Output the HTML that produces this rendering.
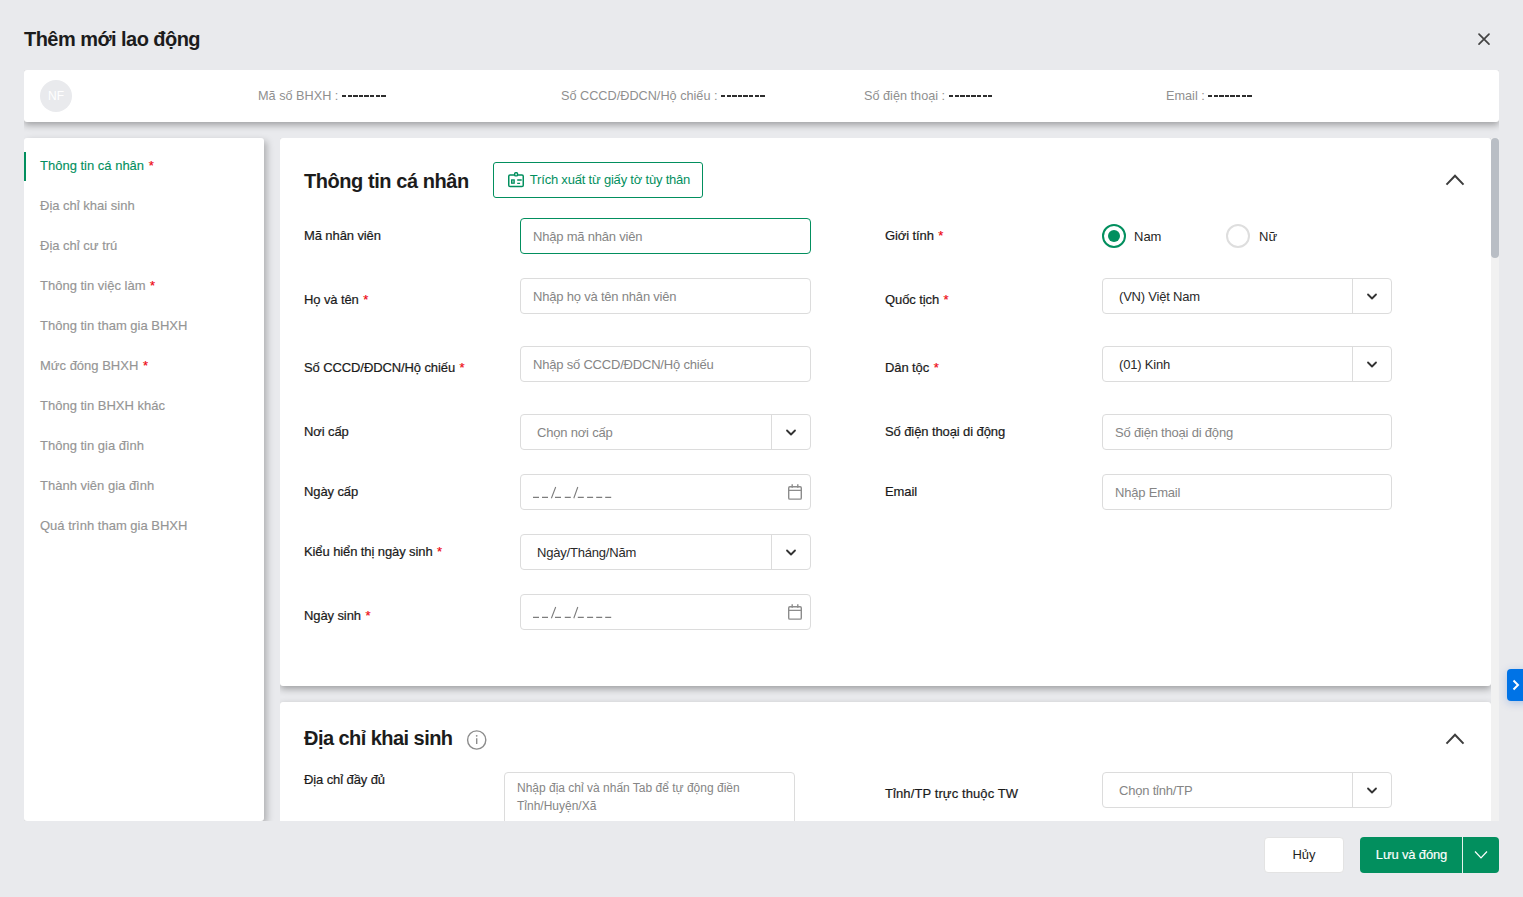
<!DOCTYPE html>
<html><head><meta charset="utf-8">
<style>
*{box-sizing:border-box;margin:0;padding:0}
html,body{width:1523px;height:897px;overflow:hidden;background:#e9eaed;font-family:"Liberation Sans",sans-serif;color:#1f1f1f;position:relative}
.abs{position:absolute}
.title{left:24px;top:28px;font-size:20px;font-weight:bold;color:#1c1c1c;white-space:nowrap;letter-spacing:-0.55px}
.close{left:1476px;top:31px;width:16px;height:16px}
.layer{position:absolute;left:0;top:0;width:1523px;height:897px;clip-path:inset(70px 24px 76px 24px)}
.main{position:absolute;left:0;top:0;width:1523px;height:897px;clip-path:inset(138px 24px 76px 280px)}
.hdr{left:24px;top:70px;width:1475px;height:52px;background:#fff;border-radius:3px;box-shadow:0 3px 7px rgba(0,0,0,.32)}
.avatar{left:40px;top:80px;width:32px;height:32px;border-radius:50%;background:#e9eaed;color:#fff;font-size:12px;line-height:32px;text-align:center}
.hinfo{top:88.5px;font-size:12.7px;color:#8f8f8f;white-space:nowrap}
.hinfo b{display:inline-block;width:43.6px;height:1.8px;vertical-align:2.5px;margin-left:0px;background:repeating-linear-gradient(90deg,#2e2e2e 0 4.3px,transparent 4.3px 5.62px)}
.nav{left:24px;top:138px;width:240px;height:683px;background:#fff;border-radius:3px;box-shadow:3px 3px 7px rgba(0,0,0,.25)}
.it{position:absolute;left:40px;font-size:13px;color:#959595;white-space:nowrap;-webkit-text-stroke:0.15px #959595}
.act{color:#028f5e;-webkit-text-stroke:0.12px #028f5e}
.req{color:#ee0a14;-webkit-text-stroke:0.2px #ee0a14;margin-left:1px}
.bar{left:24px;top:152px;width:2px;height:29px;background:#028f5e}
.card{left:280px;width:1211px;background:#fff;border-radius:3px;box-shadow:0 3px 7px rgba(0,0,0,.32)}
.sbtrack{left:1491px;top:138px;width:8px;height:700px;background:#f1f1f1}
.sbthumb{left:1491px;top:138px;width:8px;height:120px;background:#b9bec5;border-radius:4px}
.h2{position:absolute;font-size:20px;font-weight:bold;color:#1c1c1c;white-space:nowrap;letter-spacing:-0.44px}
.lbl{position:absolute;font-size:13px;color:#1a1a1a;white-space:nowrap;-webkit-text-stroke:0.2px #1a1a1a;letter-spacing:-0.1px}
.rad{position:absolute;font-size:13px;color:#1f1f1f;white-space:nowrap}
.inp{position:absolute;width:291px;height:36px;border:1px solid #dcdcdc;border-radius:4px;background:#fff}
.ph{position:absolute;left:12px;top:10px;font-size:13px;color:#858585;white-space:nowrap;letter-spacing:-0.2px}
.val{color:#2a2a2a}
.dv{position:absolute;right:38px;top:0;width:1px;height:34px;background:#dcdcdc}
.chev{position:absolute;right:13px;top:14px;width:12px;height:8px}
.cal{position:absolute;right:7px;top:9px;width:16px;height:16px}
.btn{position:absolute;font-size:13px;white-space:nowrap;text-align:center}
</style></head><body>
<div class="abs title">Thêm mới lao động</div>
<svg class="abs close" viewBox="0 0 16 16"><path d="M3 3.2L13 13.2M13 3.2L3 13.2" stroke="#444" stroke-width="1.7" stroke-linecap="round" fill="none"/></svg>

<div class="layer">
  <div class="abs hdr"></div>
  <div class="abs avatar">NF</div>
  <div class="abs hinfo" style="left:258px">Mã số BHXH : <b></b></div>
  <div class="abs hinfo" style="left:561px">Số CCCD/ĐDCN/Hộ chiếu : <b></b></div>
  <div class="abs hinfo" style="left:864px">Số điện thoại : <b></b></div>
  <div class="abs hinfo" style="left:1166px">Email : <b></b></div>

  <div class="abs nav"></div>
  <div class="abs bar"></div>
  <div class="it act" style="top:158px">Thông tin cá nhân <span class="req">*</span></div>
  <div class="it" style="top:198px">Địa chỉ khai sinh</div>
  <div class="it" style="top:238px">Địa chỉ cư trú</div>
  <div class="it" style="top:278px">Thông tin việc làm <span class="req">*</span></div>
  <div class="it" style="top:318px">Thông tin tham gia BHXH</div>
  <div class="it" style="top:358px">Mức đóng BHXH <span class="req">*</span></div>
  <div class="it" style="top:398px">Thông tin BHXH khác</div>
  <div class="it" style="top:438px">Thông tin gia đình</div>
  <div class="it" style="top:478px">Thành viên gia đình</div>
  <div class="it" style="top:518px">Quá trình tham gia BHXH</div>

</div>
<div class="main">
  <div class="abs card" style="top:138px;height:548px"></div>
  <div class="abs card" style="top:702px;height:200px"></div>
  <div class="abs sbtrack"></div>
  <div class="abs sbthumb"></div>

  <!-- section 1 -->
  <div class="h2" style="left:304px;top:169.5px">Thông tin cá nhân</div>
  <div class="btn" style="left:493px;top:162px;width:210px;height:36px;border:1px solid #028f5e;border-radius:3px;color:#028f5e;line-height:34px;padding-left:24px;letter-spacing:-0.2px">Trích xuất từ giấy tờ tùy thân</div>
  <svg class="abs" style="left:507px;top:171px" width="18" height="18" viewBox="0 0 18 18"><rect x="1.75" y="3.95" width="14.5" height="11.6" rx="1.3" fill="none" stroke="#028f5e" stroke-width="1.5"/><rect x="7.7" y="1.7" width="2.8" height="3.2" rx="0.8" fill="#fff" stroke="#028f5e" stroke-width="1.4"/><rect x="4.6" y="8.9" width="2.6" height="3.3" fill="#9bd3bf" stroke="#028f5e" stroke-width="1.2"/><path d="M10.2 9h4.5M10.2 12.3h2.9" stroke="#028f5e" stroke-width="1.3"/></svg>
  <svg class="abs" style="left:1445px;top:172px" width="20" height="14" viewBox="0 0 20 14"><path d="M1.5 12.6L10 3.8L18.5 12.6" stroke="#3d3d3d" stroke-width="2" fill="none"/></svg>

  <div class="lbl" style="left:304px;top:228px">Mã nhân viên</div>
  <div class="inp" style="left:520px;top:218px;border-color:#028f5e"><span class="ph">Nhập mã nhân viên</span></div>
  <div class="lbl" style="left:304px;top:292px">Họ và tên <span class="req">*</span></div>
  <div class="inp" style="left:520px;top:278px"><span class="ph">Nhập họ và tên nhân viên</span></div>
  <div class="lbl" style="left:304px;top:360px">Số CCCD/ĐDCN/Hộ chiếu <span class="req">*</span></div>
  <div class="inp" style="left:520px;top:346px"><span class="ph">Nhập số CCCD/ĐDCN/Hộ chiếu</span></div>
  <div class="lbl" style="left:304px;top:424px">Nơi cấp</div>
  <div class="inp" style="left:520px;top:414px"><span class="ph" style="left:16px">Chọn nơi cấp</span><div class="dv"></div><svg class="chev" viewBox="0 0 12 8"><path d="M2 1.5L6 5.5L10 1.5" stroke="#333" stroke-width="1.8" stroke-linecap="round" stroke-linejoin="round" fill="none"/></svg></div>
  <div class="lbl" style="left:304px;top:484px">Ngày cấp</div>
  <div class="inp" style="left:520px;top:474px"><svg class="abs" style="left:-1px;top:-1px" width="100" height="34" viewBox="0 0 100 34"><path d="M13 23.4h6M22 23.4h6M35 23.4h6M44.8 23.4h6M57.8 23.4h6M67.1 23.4h6M76.2 23.4h6M85.2 23.4h6" stroke="#7d7d7d" stroke-width="1.2"/><path d="M35.7 13L31.4 24.2M57.8 13L53.8 24.2" stroke="#7d7d7d" stroke-width="1.1"/></svg><svg class="cal" viewBox="0 0 16 16"><rect x="1.7" y="2.8" width="12.6" height="12.3" rx="1.2" fill="none" stroke="#8c8c8c" stroke-width="1.4"/><path d="M1 6.4h14M5.2 0.3v3.5M10.8 0.3v3.5" stroke="#8c8c8c" stroke-width="1.4"/></svg></div>
  <div class="lbl" style="left:304px;top:544px">Kiểu hiển thị ngày sinh <span class="req">*</span></div>
  <div class="inp" style="left:520px;top:534px"><span class="ph val" style="left:16px">Ngày/Tháng/Năm</span><div class="dv"></div><svg class="chev" viewBox="0 0 12 8"><path d="M2 1.5L6 5.5L10 1.5" stroke="#333" stroke-width="1.8" stroke-linecap="round" stroke-linejoin="round" fill="none"/></svg></div>
  <div class="lbl" style="left:304px;top:608px">Ngày sinh <span class="req">*</span></div>
  <div class="inp" style="left:520px;top:594px"><svg class="abs" style="left:-1px;top:-1px" width="100" height="34" viewBox="0 0 100 34"><path d="M13 23.4h6M22 23.4h6M35 23.4h6M44.8 23.4h6M57.8 23.4h6M67.1 23.4h6M76.2 23.4h6M85.2 23.4h6" stroke="#7d7d7d" stroke-width="1.2"/><path d="M35.7 13L31.4 24.2M57.8 13L53.8 24.2" stroke="#7d7d7d" stroke-width="1.1"/></svg><svg class="cal" viewBox="0 0 16 16"><rect x="1.7" y="2.8" width="12.6" height="12.3" rx="1.2" fill="none" stroke="#8c8c8c" stroke-width="1.4"/><path d="M1 6.4h14M5.2 0.3v3.5M10.8 0.3v3.5" stroke="#8c8c8c" stroke-width="1.4"/></svg></div>

  <div class="lbl" style="left:885px;top:228px">Giới tính <span class="req">*</span></div>
  <div class="abs" style="left:1102px;top:224px;width:24px;height:24px;border:2px solid #028f5e;border-radius:50%"><div class="abs" style="left:4px;top:4px;width:12px;height:12px;border-radius:50%;background:#028f5e"></div></div>
  <div class="rad" style="left:1134px;top:229px">Nam</div>
  <div class="abs" style="left:1226px;top:224px;width:24px;height:24px;border:2px solid #dedede;border-radius:50%"></div>
  <div class="rad" style="left:1259px;top:229px">Nữ</div>
  <div class="lbl" style="left:885px;top:292px">Quốc tịch <span class="req">*</span></div>
  <div class="inp" style="left:1102px;top:278px;width:290px"><span class="ph val" style="left:16px">(VN) Việt Nam</span><div class="dv"></div><svg class="chev" viewBox="0 0 12 8"><path d="M2 1.5L6 5.5L10 1.5" stroke="#333" stroke-width="1.8" stroke-linecap="round" stroke-linejoin="round" fill="none"/></svg></div>
  <div class="lbl" style="left:885px;top:360px">Dân tộc <span class="req">*</span></div>
  <div class="inp" style="left:1102px;top:346px;width:290px"><span class="ph val" style="left:16px">(01) Kinh</span><div class="dv"></div><svg class="chev" viewBox="0 0 12 8"><path d="M2 1.5L6 5.5L10 1.5" stroke="#333" stroke-width="1.8" stroke-linecap="round" stroke-linejoin="round" fill="none"/></svg></div>
  <div class="lbl" style="left:885px;top:424px">Số điện thoại di động</div>
  <div class="inp" style="left:1102px;top:414px;width:290px"><span class="ph">Số điện thoại di động</span></div>
  <div class="lbl" style="left:885px;top:484px">Email</div>
  <div class="inp" style="left:1102px;top:474px;width:290px"><span class="ph">Nhập Email</span></div>

  <!-- section 2 -->
  <div class="h2" style="left:304px;top:726.5px;letter-spacing:-0.55px">Địa chỉ khai sinh</div>
  <svg class="abs" style="left:466px;top:729px" width="22" height="22" viewBox="0 0 22 22"><circle cx="10.7" cy="11" r="9.1" fill="none" stroke="#8c8c8c" stroke-width="1.4"/><path d="M10.7 9.3v5.8" stroke="#8c8c8c" stroke-width="1.4"/><circle cx="10.7" cy="6.8" r="0.9" fill="#8c8c8c"/></svg>
  <svg class="abs" style="left:1445px;top:731px" width="20" height="14" viewBox="0 0 20 14"><path d="M1.5 12.6L10 3.8L18.5 12.6" stroke="#3d3d3d" stroke-width="2" fill="none"/></svg>
  <div class="lbl" style="left:304px;top:772px">Địa chỉ đầy đủ</div>
  <div class="inp" style="left:504px;top:772px;width:291px;height:60px"><span class="ph" style="font-size:12px;top:6px;line-height:18px;white-space:normal;width:270px;letter-spacing:0">Nhập địa chỉ và nhấn Tab để tự động điền Tỉnh/Huyện/Xã</span></div>
  <div class="lbl" style="left:885px;top:786px;letter-spacing:0.1px">Tỉnh/TP trực thuộc TW</div>
  <div class="inp" style="left:1102px;top:772px;width:290px"><span class="ph" style="left:16px">Chọn tỉnh/TP</span><div class="dv"></div><svg class="chev" viewBox="0 0 12 8"><path d="M2 1.5L6 5.5L10 1.5" stroke="#333" stroke-width="1.8" stroke-linecap="round" stroke-linejoin="round" fill="none"/></svg></div>
</div>

<!-- blue tab -->
<div class="abs" style="left:1507px;top:669px;width:24px;height:32px;background:#0073e6;border-radius:4px;box-shadow:0 2px 8px rgba(0,80,200,.25)"></div>
<svg class="abs" style="left:1511px;top:679px" width="10" height="12" viewBox="0 0 10 12"><path d="M2.5 1.5L7 6L2.5 10.5" stroke="#fff" stroke-width="2" fill="none"/></svg>

<!-- footer -->
<div class="btn" style="left:1264px;top:837px;width:80px;height:36px;background:#fff;border:1px solid #e3e3e3;border-radius:4px;line-height:34px;color:#1f1f1f">Hủy</div>
<div class="btn" style="left:1360px;top:837px;width:139px;height:36px;background:#028f5e;border-radius:4px;color:#fff"></div>
<div class="btn" style="left:1360px;top:837px;width:103px;height:36px;line-height:36px;color:#fff;letter-spacing:-0.15px;-webkit-text-stroke:0.15px #fff">Lưu và đóng</div>
<div class="abs" style="left:1462px;top:837px;width:1px;height:36px;background:#e6f2ec"></div>
<svg class="abs" style="left:1474px;top:850px" width="14" height="10" viewBox="0 0 14 10"><path d="M1 1.5L7 7.8L13 1.5" stroke="#fff" stroke-width="1.2" fill="none"/></svg>
</body></html>
